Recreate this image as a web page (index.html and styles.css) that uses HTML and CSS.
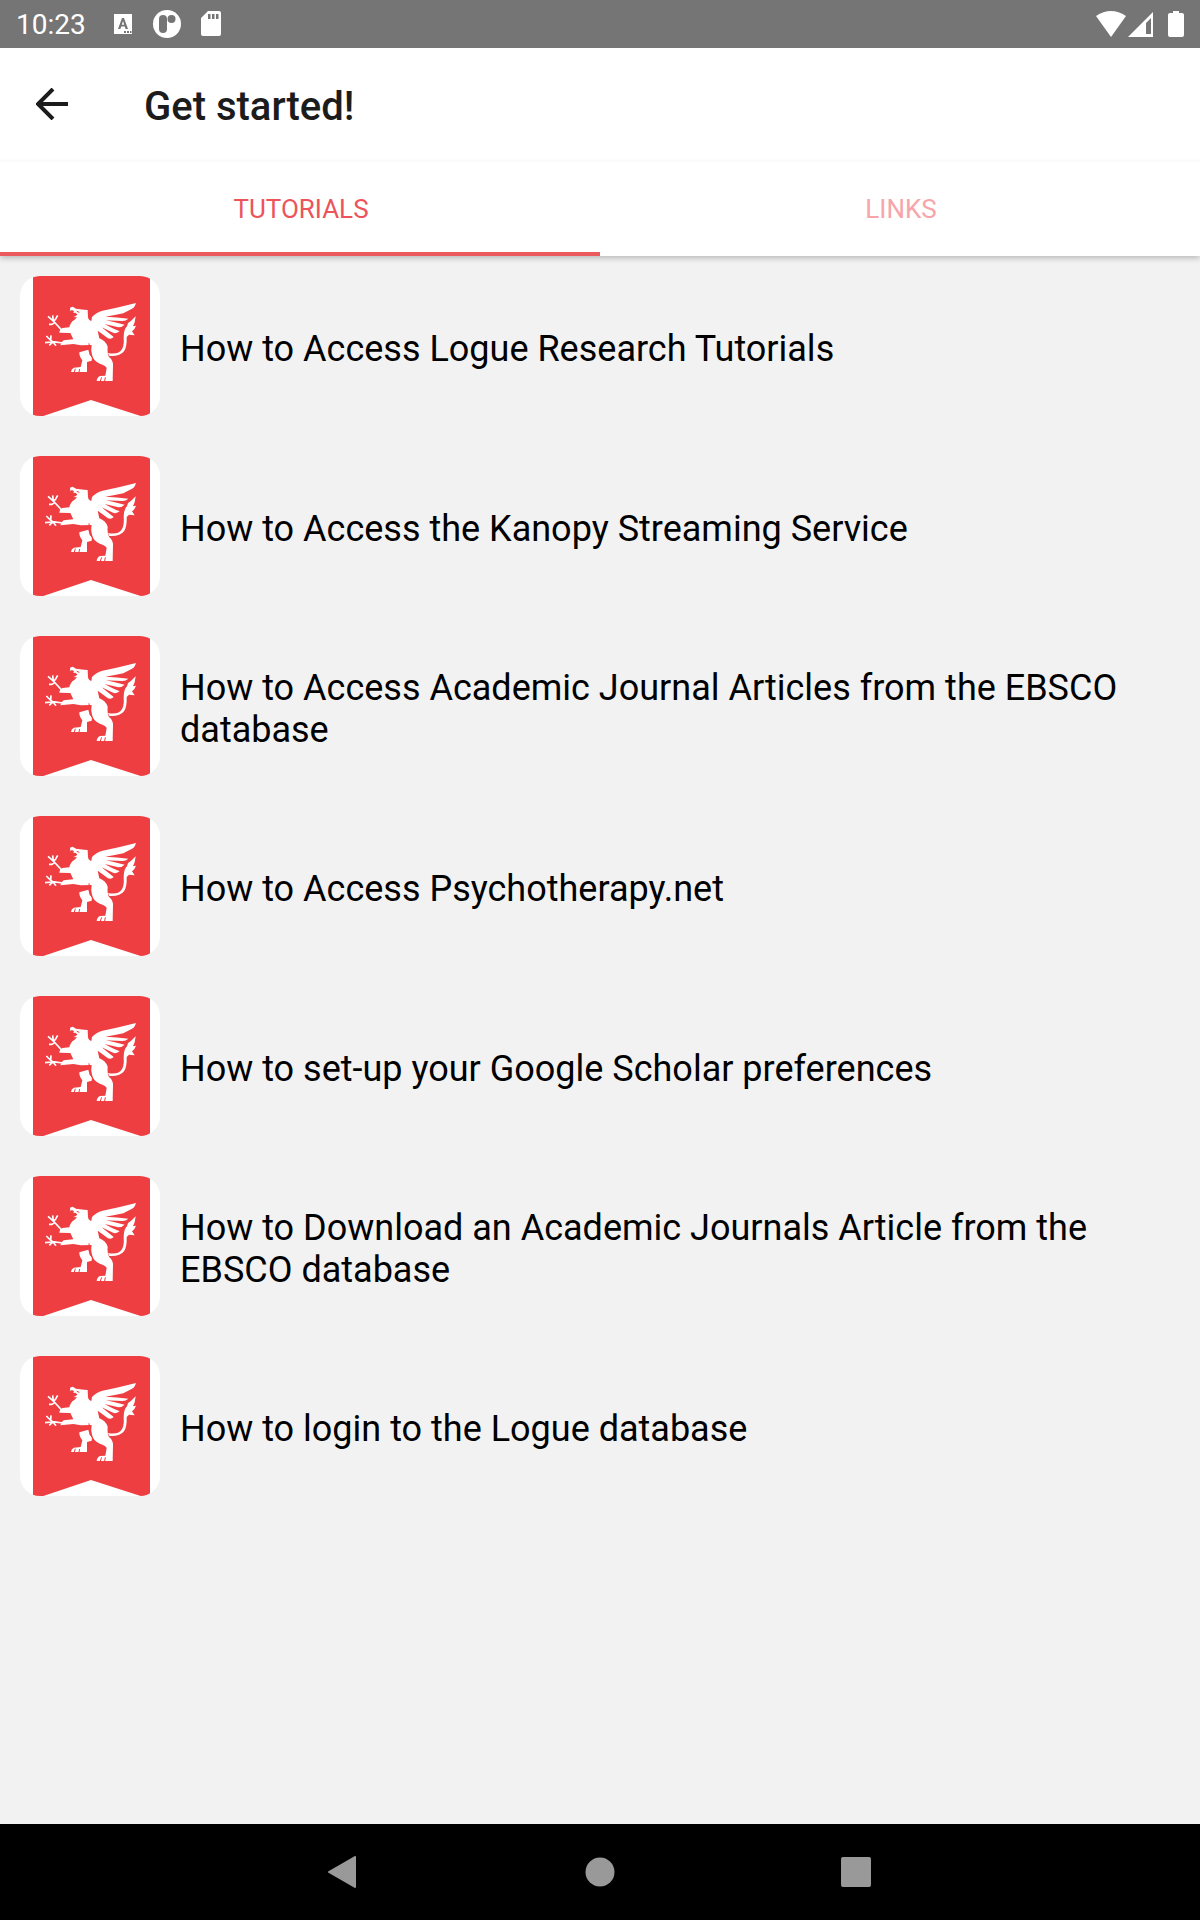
FILE: index.html
```html
<!DOCTYPE html>
<html lang="en">
<head>
  <meta charset="UTF-8" />
  <meta name="viewport" content="width=device-width, initial-scale=1.0"/>
  <title>Get started!</title>
  <link rel="stylesheet" href="styles.css">
</head>
<body>
  <!-- banner logo, shared by every row -->
  <svg class="defs" aria-hidden="true">
    <symbol id="griffin" viewBox="30 33 420 420">
      <path fill="#ef3e42" d="M69 33H420V453H392L243 405L100 453H69Z"/>
      <g fill="#fff">
        <path d="M180 128L188 125L198 131L222 134L233 135L234 157Q236 167 244 168L246 156Q258 142 278 137Q325 128 378 114Q374 128 366 131L340 145Q315 150 286 155Q320 157 355 161Q348 168 337 168L288 166Q315 172 344 179Q336 187 325 187L284 177Q302 188 329 199Q321 206 311 204L275 187Q292 201 311 216Q304 224 294 220L263 197L268 220Q287 227 293 245Q291 267 298 277Q309 286 309 300L308 348H260Q261 337 270 333L286 332L290 309Q286 301 271 297Q250 288 246 269Q242 255 245 240L213 241L190 237L151 241Q153 231 161 226L190 223L181 204L148 203Q149 192 158 189L178 187Q182 170 193 165L201 157L190 156Q200 154 202 148L196 143L190 144L192 138L185 135L181 139Z"/>
        <path d="M208 262L235 254L239 270L246 277L245 287L231 291L231 321H183Q184 311 192 308L212 306L217 286Q207 275 208 262Z"/>
        <path d="M294 264Q321 269 331 259Q344 246 341 216Q341 193 351 184L354 174Q363 169 377 154L374 172L369 184L378 182Q374 194 366 199L374 211L357 209L350 216Q351 246 342 259Q330 275 298 273Z"/>
      </g>
      <g fill="none" stroke="#fff" stroke-width="5" stroke-linejoin="round">
        <path d="M156 196L130 168L114 154M130 168L128 151M130 168L136 164L143 151M134 173L126 178L117 178"/>
        <path d="M158 234L128 230L121 225L109 213M122 226L123 211M128 231L105 233M129 231L138 242M128 231L118 241"/>
      </g>
      <path fill="none" stroke="#ef3e42" stroke-width="3" d="M237 235Q238 270 252 287M193 321L196 311M207 321L209 312M271 348L275 337M284 348L286 337M200 139L208 142"/>
    </symbol>
  </svg>

  <div class="status-bar">
    <span class="clock">10:23</span>
    <svg class="status-icon" viewBox="0 0 28 28">
      <path fill="#fff" fill-rule="evenodd" d="M5 4H23V24H5ZM13 8L9 19H11.400L12.200 16.500H15.800L16.600 19H19L15 8ZM14 11L15.200 14.700H12.800ZM15 21V23H17V21ZM18 21V23H20V21ZM21 21V23H22.500V21Z"/>
    </svg>
    <svg class="status-icon" viewBox="0 0 28 28">
      <circle cx="14" cy="14" r="14" fill="#fff"/>
      <rect x="6" y="5" width="8" height="18" rx="4" fill="#757575"/>
      <circle cx="18.500" cy="9" r="4" fill="#757575"/>
    </svg>
    <svg class="status-icon" viewBox="0 0 28 28">
      <path fill="#fff" fill-rule="evenodd" d="M11 1H22Q24 1 24 3V24Q24 26 22 26H6Q4 26 4 24V8ZM11 4V9H13.500V4ZM15 4V9H17.500V4ZM19 4V9H21.500V4Z"/>
    </svg>
    <div class="status-right">
      <svg width="30" height="26" viewBox="0 0 30 26"><path fill="#fff" d="M0 5Q15 -5 30 5L15 26Z"/></svg>
      <svg width="26" height="26" viewBox="0 0 26 26"><path fill="#fff" fill-rule="evenodd" d="M25 1V26H0ZM23 7L18 12V23H23Z"/></svg>
      <svg class="battery" width="16" height="26" viewBox="0 0 16 26"><path fill="#fff" d="M5 0H11V2H14Q16 2 16 4V24Q16 26 14 26H2Q0 26 0 24V4Q0 2 2 2H5Z"/></svg>
    </div>
  </div>

  <header class="app-bar">
    <button class="back" aria-label="Back">
      <svg width="32" height="32" viewBox="0 0 32 32" fill="none" stroke="#1c1c1c" stroke-width="4"><path d="M32 16H3M17 1L2 16L17 31"/></svg>
    </button>
    <h1>Get started!</h1>
  </header>

  <nav class="tabs">
    <a href="#tutorials" class="tab active">TUTORIALS</a>
    <a href="#links" class="tab">LINKS</a>
  </nav>

  <main id="tutorials">
    <ul class="list">
      <li><svg class="logo"><use href="#griffin"/></svg><span>How to Access Logue Research Tutorials</span></li>
      <li><svg class="logo"><use href="#griffin"/></svg><span>How to Access the Kanopy Streaming Service</span></li>
      <li><svg class="logo"><use href="#griffin"/></svg><span>How to Access Academic Journal Articles from the EBSCO database</span></li>
      <li><svg class="logo"><use href="#griffin"/></svg><span>How to Access Psychotherapy.net</span></li>
      <li><svg class="logo"><use href="#griffin"/></svg><span>How to set-up your Google Scholar preferences</span></li>
      <li><svg class="logo"><use href="#griffin"/></svg><span>How to Download an Academic Journals Article from the EBSCO database</span></li>
      <li><svg class="logo"><use href="#griffin"/></svg><span>How to login to the Logue database</span></li>
    </ul>
  </main>

  <footer class="nav-bar">
    <button aria-label="Back">
      <svg width="32" height="32" viewBox="0 0 32 32"><path fill="#999" stroke="#999" stroke-width="2" stroke-linejoin="round" d="M27 1V31L1 16Z"/></svg>
    </button>
    <button aria-label="Home">
      <svg width="32" height="32" viewBox="0 0 32 32"><circle cx="16" cy="16" r="14.500" fill="#999"/></svg>
    </button>
    <button aria-label="Recent apps">
      <svg width="32" height="32" viewBox="0 0 32 32"><rect x="1" y="1" width="30" height="30" rx="2" fill="#999"/></svg>
    </button>
  </footer>
</body>
</html>
```
FILE: styles.css
```css
* {
  box-sizing: border-box;
  margin: 0;
  padding: 0;
}

body {
  font-family: Roboto, sans-serif;
  background: #f2f2f2;
  color: #000;
  min-height: 100vh;
  display: flex;
  flex-direction: column;
}

button {
  background: none;
  border: none;
  cursor: pointer;
}

svg {
  display: block;
  flex-shrink: 0;
}

.defs {
  position: absolute;
  width: 0;
  height: 0;
}

.status-bar {
  height: 48px;
  padding: 0 16px;
  background: #757575;
  color: #fff;
  display: flex;
  align-items: center;
  gap: 16px;
}

.clock {
  font-size: 28px;
  line-height: 32px;
  padding-top: 2px;
  margin-right: 7px;
}

.status-icon {
  width: 28px;
  height: 28px;
}

.status-right {
  margin-left: auto;
  display: flex;
  gap: 2px;
}

.battery {
  margin-left: 12px;
}

.app-bar {
  position: relative;
  z-index: 1;
  height: 112px;
  padding: 0 36px;
  background: #fff;
  border-bottom: 1px solid #fdfdfd;
  display: flex;
  align-items: center;
  gap: 76px;
}

.back {
  width: 32px;
  height: 32px;
}

h1 {
  padding-top: 6px;
  font-size: 40px;
  line-height: 48px;
  font-weight: 500;
  color: #1c1c1c;
}

.tabs {
  height: 96px;
  background: #fff;
  border-top: 2px solid #fbfbfb;
  box-shadow: 0 2px 6px rgba(0, 0, 0, 0.25);
  display: flex;
}

.tab {
  flex: 1;
  display: flex;
  align-items: center;
  justify-content: center;
  padding: 3px 0 0 2px;
  border-bottom: 4px solid transparent;
  color: #f7a5aa;
  font-size: 26px;
  line-height: 32px;
  text-decoration: none;
}

.tab.active {
  color: #ec545a;
  border-bottom-color: #ec5a5e;
}

main {
  flex: 1;
}

.list {
  list-style: none;
}

.list li {
  min-height: 180px;
  padding: 20px;
  display: flex;
  align-items: center;
  gap: 20px;
  font-size: 36px;
  line-height: 42px;
}

.list span {
  padding-top: 6px;
}

.logo {
  width: 140px;
  height: 140px;
  border-radius: 20px;
  background: #fff;
}

.nav-bar {
  height: 96px;
  background: #000;
  display: flex;
  align-items: center;
  justify-content: center;
  gap: 224px;
}

.nav-bar button {
  width: 32px;
  height: 32px;
}
```
